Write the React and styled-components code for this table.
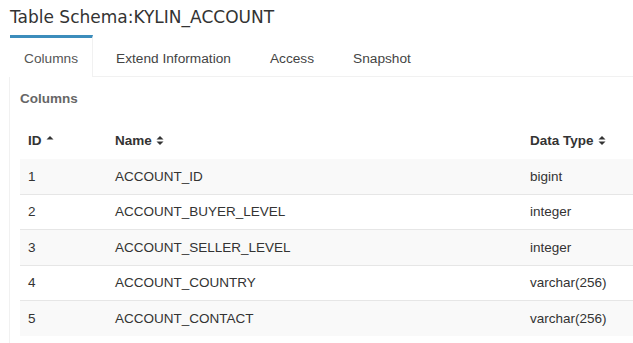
import React from 'react';
import styled, { createGlobalStyle } from 'styled-components';

const GlobalStyle = createGlobalStyle`
  html, body {
    margin: 0;
    padding: 0;
    background: #ffffff;
  }
  body {
    font-family: "Liberation Sans", Arial, sans-serif;
    color: #333333;
  }
`;

const Page = styled.div`
  width: 633px;
  height: 343px;
  overflow: hidden;
  padding: 0 0 0 10px;
  box-sizing: border-box;
`;

const Title = styled.h3`
  margin: 0;
  padding-top: 5px;
  height: 30px;
  font-family: "DejaVu Sans", sans-serif;
  font-weight: normal;
  font-size: 17px;
  line-height: 24px;
  color: #333333;
`;

const TabBar = styled.ul`
  display: flex;
  list-style: none;
  margin: 0;
  padding: 0;
  height: 42px;
  box-sizing: border-box;
  border-bottom: 1px solid #f1f1f1;
`;

const Tab = styled.li`
  box-sizing: border-box;
  height: ${(p) => (p.$active ? '42px' : '41px')};
  padding: 2px ${(p) => (p.$active ? '14px' : '18px')} 0;
  margin-right: ${(p) => (p.$active ? '5px' : '2px')};
  display: flex;
  align-items: center;
  font-size: 13.7px;
  color: ${(p) => (p.$active ? '#555555' : '#444444')};
  background: #ffffff;
  border-top: 3px solid ${(p) => (p.$active ? '#3c8dbc' : 'transparent')};
  border-right: 1px solid ${(p) => (p.$active ? '#f1f1f1' : 'transparent')};
  margin-bottom: ${(p) => (p.$active ? '-1px' : '0')};
`;

const Panel = styled.div`
  border-left: 1px solid #f1f1f1;
  padding: 0 0 0 10px;
  height: 300px;
  margin-left: -1px;
`;

const SectionLabel = styled.div`
  font-size: 13.5px;
  font-weight: bold;
  color: #666666;
  height: 44px;
  line-height: 43px;
`;

const Table = styled.table`
  width: 613px;
  border-collapse: collapse;
  font-size: 13.5px;
`;

const HeadCell = styled.th`
  text-align: left;
  font-weight: bold;
  color: #333333;
  height: 38px;
  padding: 1px 8px 0;
  box-sizing: border-box;
  width: ${(p) => p.$w || 'auto'};
  white-space: nowrap;
`;

const Row = styled.tr`
  background: ${(p) => (p.$striped ? '#f9f9f9' : '#ffffff')};
  border-top: ${(p) => (p.$first ? 'none' : '1px solid #e6e6e6')};
`;

const Cell = styled.td`
  height: 34.5px;
  padding: 0 8px;
  color: #333333;
  white-space: nowrap;
`;

const SortIcon = styled.svg`
  display: inline-block;
  vertical-align: middle;
  margin-left: 4px;
  margin-top: -2px;
`;

const SortBoth = () => (
  <SortIcon width="8" height="11" viewBox="0 0 8 11">
    <path d="M0.5 4.5 L4 1 L7.5 4.5 Z" fill="#333" />
    <path d="M0.5 6.5 L4 10 L7.5 6.5 Z" fill="#333" />
  </SortIcon>
);

const SortUp = () => (
  <SortIcon width="8" height="11" viewBox="0 0 8 11">
    <path d="M0.5 4.5 L4 1 L7.5 4.5 Z" fill="#333" />
  </SortIcon>
);

const columns = [
  { id: 1, name: 'ACCOUNT_ID', type: 'bigint' },
  { id: 2, name: 'ACCOUNT_BUYER_LEVEL', type: 'integer' },
  { id: 3, name: 'ACCOUNT_SELLER_LEVEL', type: 'integer' },
  { id: 4, name: 'ACCOUNT_COUNTRY', type: 'varchar(256)' },
  { id: 5, name: 'ACCOUNT_CONTACT', type: 'varchar(256)' },
];

const tabs = ['Columns', 'Extend Information', 'Access', 'Snapshot'];

export default function App() {
  return (
    <Page>
      <GlobalStyle />
      <Title>Table Schema:KYLIN_ACCOUNT</Title>
      <TabBar>
        {tabs.map((t, i) => (
          <Tab key={t} $active={i === 0}>
            {t}
          </Tab>
        ))}
      </TabBar>
      <Panel>
        <SectionLabel>Columns</SectionLabel>
        <Table>
          <thead>
            <tr>
              <HeadCell $w="87px">
                ID
                <SortUp />
              </HeadCell>
              <HeadCell $w="415px">
                Name
                <SortBoth />
              </HeadCell>
              <HeadCell>
                Data Type
                <SortBoth />
              </HeadCell>
            </tr>
          </thead>
          <tbody>
            {columns.map((c, i) => (
              <Row key={c.id} $striped={i % 2 === 0} $first={i === 0}>
                <Cell>{c.id}</Cell>
                <Cell>{c.name}</Cell>
                <Cell>{c.type}</Cell>
              </Row>
            ))}
          </tbody>
        </Table>
      </Panel>
    </Page>
  );
}
